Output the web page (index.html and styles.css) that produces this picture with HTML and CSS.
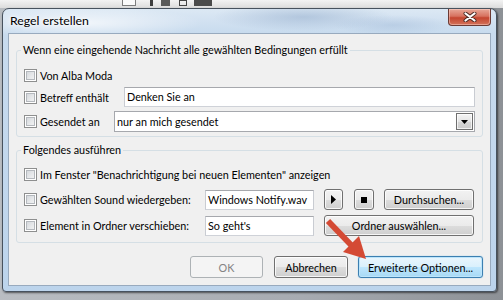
FILE: index.html
```html
<!DOCTYPE html>
<html lang="de">
<head>
<meta charset="utf-8">
<title>Regel erstellen</title>
<link rel="stylesheet" href="styles.css">
</head>
<body>
<div class="backdrop">
  <span class="bk-box"></span>
  <span class="bk-icon i1"></span>
  <span class="bk-icon i2"></span>
  <span class="bk-icon i3"></span>
  <span class="bk-icon i4"></span>
</div>
<div class="window">
  <div class="titlebar">
    <span class="title">Regel erstellen</span>
    <span class="close"><svg width="14" height="10" viewBox="0 0 14 10"><path d="M2.5 1.5 L11.5 8.5 M11.5 1.5 L2.5 8.5" stroke="#4a2a24" stroke-width="4" stroke-linecap="round"/><path d="M2.5 1.5 L11.5 8.5 M11.5 1.5 L2.5 8.5" stroke="#fff" stroke-width="2.2" stroke-linecap="round"/></svg></span>
  </div>
  <div class="client">
    <fieldset class="group cond">
      <legend>Wenn eine eingehende Nachricht alle gewählten Bedingungen erfüllt</legend>
      <div class="row r1"><span class="chk"><span class="box"></span>Von Alba Moda</span></div>
      <div class="row r2"><span class="chk w-betreff"><span class="box"></span>Betreff enthält</span><span class="field grow">Denken Sie an</span></div>
      <div class="row r3"><span class="chk w-gesendet"><span class="box"></span>Gesendet an</span><span class="combo grow"><span class="combo-text">nur an mich gesendet</span><span class="drop"><svg width="7" height="4" viewBox="0 0 7 4"><path d="M0 0 H7 L3.5 4 Z" fill="#000"/></svg></span></span></div>
    </fieldset>
    <fieldset class="group act">
      <legend>Folgendes ausführen</legend>
      <div class="row a1"><span class="chk"><span class="box"></span>Im Fenster "Benachrichtigung bei neuen Elementen" anzeigen</span></div>
      <div class="row a2"><span class="chk w-act"><span class="box"></span>Gewählten Sound wiedergeben:</span><span class="field short">Windows Notify.wav</span><span class="btn play"><svg width="5" height="9" viewBox="0 0 5 9"><path d="M0 0 L5 4.5 L0 9 Z" fill="#000"/></svg></span><span class="btn stop"><svg width="6" height="6" viewBox="0 0 6 6"><rect width="6" height="6" fill="#000"/></svg></span><span class="btn browse">Durchsuchen...</span></div>
      <div class="row a3"><span class="chk w-act"><span class="box"></span>Element in Ordner verschieben:</span><span class="field short">So geht's</span><span class="btn folder">Ordner auswählen...</span></div>
    </fieldset>
    <div class="actions">
      <span class="btn disabled ok">OK</span>
      <span class="btn cancel">Abbrechen</span>
      <span class="btn default more">Erweiterte Optionen...</span>
    </div>
  </div>
</div>
<svg class="arrow" width="54" height="54" viewBox="0 0 54 54">
  <path d="M10 11 L35 37" stroke="#d44a34" stroke-width="6" stroke-linecap="butt"/>
  <path d="M48 49 L25 42 L41 26 Z" fill="#d44a34"/>
</svg>
</body>
</html>
```

FILE: styles.css
```css
* { box-sizing: border-box; }

html, body { margin: 0; padding: 0; }

body {
  width: 503px;
  height: 300px;
  overflow: hidden;
  position: relative;
  padding-left: 2px;
  background: linear-gradient(90deg, #b9bdc2 0, #a7abb1 60%, #8d9196 100%);
  font-family: Lato, "Open Sans", sans-serif;
  font-size: 10.8px;
  color: #000;
}

/* strip of the window behind */
.backdrop {
  height: 8px;
  margin-left: -2px;
  background: linear-gradient(#f3f3f3, #dcdcdc);
  display: flex;
  align-items: flex-start;
}
.bk-box {
  width: 14px;
  height: 6px;
  margin-left: 122px;
  border: 1px solid #7d7d7d;
  border-top: none;
  background: #fafafa;
}
.bk-icon {
  height: 6px;
  background: #3e3e3e;
}
.i1 { width: 3px; margin-left: 14px; }
.i2 { width: 9px; margin-left: 8px; background: #5a5a5a; }
.i3 { width: 8px; margin-left: 9px; border: 1px solid #444; background: transparent; }
.i4 { width: 18px; margin-left: 7px; background: #4b4b4b; }

/* window frame */
.window {
  width: 495px;
  height: 284px;
  border: 1px solid #47525e;
  border-radius: 7px 7px 4px 4px;
  padding: 0 5px 5px;
  display: flex;
  flex-direction: column;
  background:
    radial-gradient(ellipse 90px 14px at 300px 8px, rgba(150, 175, 205, .55), transparent),
    radial-gradient(ellipse 60px 10px at 390px 16px, rgba(160, 185, 215, .45), transparent),
    radial-gradient(ellipse 120px 16px at 80px 14px, rgba(255, 255, 255, .7), transparent),
    linear-gradient(#dce8f4 0, #c8dbee 24px, #bcd4ec 100%);
  box-shadow: 1px 1px 2px rgba(0, 0, 0, .55);
}

.titlebar {
  height: 24px;
  margin: 0 -5px;
  padding-left: 7px;
  padding-right: 5px;
  display: flex;
  justify-content: space-between;
  align-items: flex-start;
}
.title {
  font-size: 12.3px;
  line-height: 24px;
  text-shadow: 0 0 6px #fff, 0 0 3px #fff;
}
.close {
  width: 43px;
  height: 17px;
  border: 1px solid #6b3a34;
  border-top: none;
  border-radius: 0 0 4px 4px;
  background: linear-gradient(#e8a898 0, #d7725f 45%, #c4452f 55%, #d3735b 100%);
  box-shadow: inset 0 0 0 1px rgba(255, 220, 210, .45);
  display: flex;
  align-items: center;
  justify-content: center;
}

/* client area */
.client {
  flex: 1;
  background: #f0f0f0;
  border: 1px solid #98aabe;
  padding: 8px 7px 0;
  display: flex;
  flex-direction: column;
}

.group {
  margin: 0;
  min-width: 0;
  border: 1px solid #d5dfe5;
  border-radius: 3px;
  padding: 7px 7px 4px 7px;
}
.group legend {
  padding: 0 2px;
  margin-left: -3px;
  line-height: 16px;
}
.cond { margin-bottom: 5px; }
.act { padding-top: 6px; padding-bottom: 6px; }

.row {
  display: flex;
  align-items: center;
  height: 20px;
}
.r2 { margin-top: 2px; }
.r3 { margin-top: 4px; height: 21px; }
.a2 { margin-top: 5px; height: 21px; }
.a3 { margin-top: 5px; height: 21px; }

.chk {
  display: flex;
  align-items: center;
  white-space: nowrap;
  flex: none;
}
.w-betreff { width: 100px; }
.w-gesendet { width: 90px; }
.w-act { width: 181px; }

.box {
  width: 13px;
  height: 13px;
  margin-right: 3px;
  border: 1px solid #8e8f8f;
  background: linear-gradient(135deg, #cdd1d6 0, #e6e8ea 55%, #f7f7f7 100%);
  box-shadow: inset 0 0 0 1px #fff, inset 0 0 0 2px #b4b8bd;
}

.field {
  height: 20px;
  border: 1px solid #abadb3;
  border-color: #a6a8ad #c9ccd2 #cfd2d8 #c9ccd2;
  background: #fff;
  padding-left: 2px;
  line-height: 18px;
  white-space: nowrap;
  overflow: hidden;
}
.grow { flex: 1; }
.short { width: 109px; margin-right: 10px; flex: none; }

.combo {
  height: 21px;
  border: 1px solid #a6a8ad;
  background: #fff;
  display: flex;
  align-items: flex-start;
  justify-content: space-between;
  padding: 1px 1px 0 2px;
}
.combo-text { line-height: 18px; }
.drop {
  width: 17px;
  height: 17px;
  border: 1px solid #6f6f6f;
  background: linear-gradient(#f4f4f4 0, #e4e4e4 50%, #d6d6d6 51%, #cbcbcb 100%);
  box-shadow: inset 0 0 0 1px rgba(255, 255, 255, .7);
  display: flex;
  align-items: center;
  justify-content: center;
}

.btn {
  height: 21px;
  border: 1px solid #707070;
  border-radius: 3px;
  background: linear-gradient(#f2f2f2 0, #ebebeb 50%, #dddddd 51%, #cfcfcf 100%);
  box-shadow: inset 0 0 0 1px rgba(255, 255, 255, .8);
  display: flex;
  align-items: center;
  justify-content: center;
  white-space: nowrap;
  flex: none;
}
.play { width: 19px; margin-right: 11px; }
.stop { width: 20px; margin-right: 10px; }
.browse { width: 90px; }
.folder { width: 150px; }

.actions {
  margin-top: 13px;
  display: flex;
  justify-content: flex-end;
}
.actions .btn { height: 22px; }
.ok { width: 73px; margin-right: 11px; }
.cancel { width: 74px; margin-right: 10px; }
.more { width: 125px; }

.disabled {
  border-color: #adb2b5;
  background: #f4f4f4;
  box-shadow: none;
  color: #838383;
}
.default {
  border-color: #3c7fb1;
  background: linear-gradient(#eaf6fd 0, #d9f0fc 50%, #bee6fd 51%, #a7d9f5 100%);
  box-shadow: inset 0 0 0 1px #bde5fb, 0 0 1px #58b4e6;
}

.arrow {
  position: absolute;
  left: 318px;
  top: 210px;
}
```
